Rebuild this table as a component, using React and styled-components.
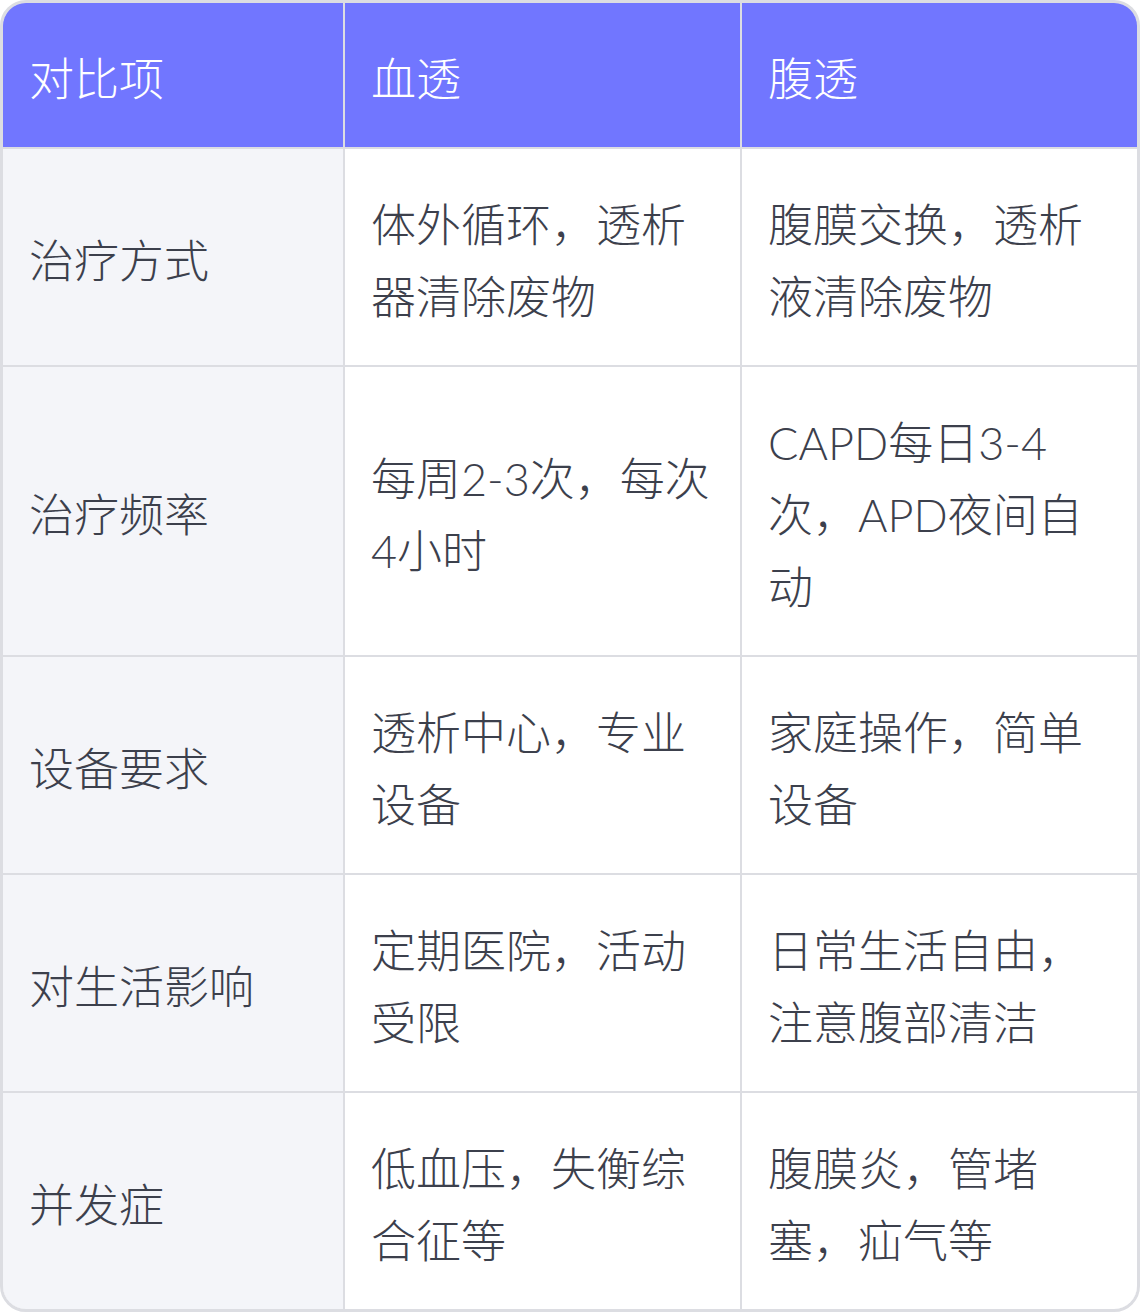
import React from 'react';
import styled, {createGlobalStyle} from 'styled-components';

const Global = createGlobalStyle`
    body{margin:0;background:#fff;}
    *{box-sizing:border-box;}
`

const Frame = styled.div`
    width:1140px;
    border:3px solid #dcdde2;
    border-radius:26px;
    overflow:hidden;
    font-family:Lato,"Noto Sans CJK SC",sans-serif;
    font-weight:300;
`
const Grid = styled.div`
    display:grid;
    grid-template-columns:340px 395px 1fr;
    gap:2px;
    background:#dcdde2;
`
const Head = styled.div`
    background:#7176ff;
    color:#fff;
    font-size:45px;
    line-height:72px;
    padding:40px 26px 32px;
`
const Cell = styled.div`
    background:${p => p.$label ? '#f4f5f9' : '#fff'};
    color:#3c404c;
    font-size:45px;
    line-height:72px;
    padding:40px 26px 32px;
    display:flex;
    align-items:center;
`

const rows = [
    ['治疗方式', '体外循环，透析器清除废物', '腹膜交换，透析液清除废物'],
    ['治疗频率', '每周2-3次，每次4小时', 'CAPD每日3-4次，APD夜间自动'],
    ['设备要求', '透析中心，专业设备', '家庭操作，简单设备'],
    ['对生活影响', '定期医院，活动受限', '日常生活自由，注意腹部清洁'],
    ['并发症', '低血压，失衡综合征等', '腹膜炎，管堵塞，疝气等'],
];

export default function App(){
    return(
        <Frame>
            <Global/>
            <Grid>
                <Head>对比项</Head>
                <Head>血透</Head>
                <Head>腹透</Head>
                {rows.map(r => (
                    <React.Fragment key={r[0]}>
                        <Cell $label>{r[0]}</Cell>
                        <Cell>{r[1]}</Cell>
                        <Cell>{r[2]}</Cell>
                    </React.Fragment>
                ))}
            </Grid>
        </Frame>);
}
